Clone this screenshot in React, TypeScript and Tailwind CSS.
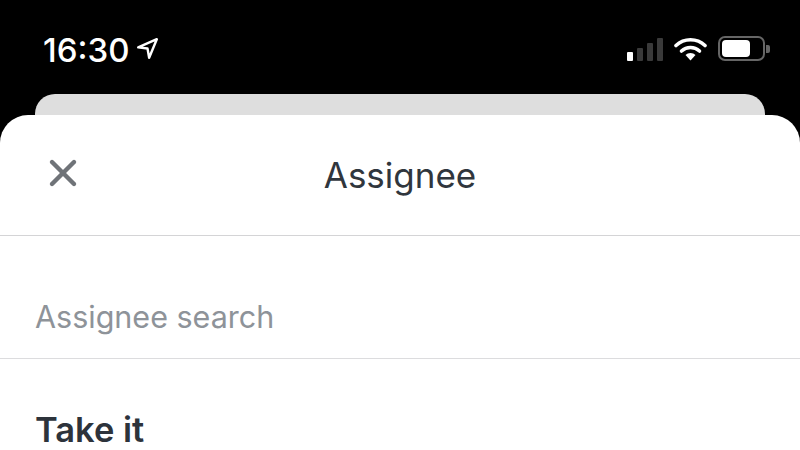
import React from "react";
import { X } from "lucide-react";

function StatusIcons() {
  return (
    <div className="flex items-center">
      {/* signal */}
      <div className="flex items-end gap-[4px] h-[24px]">
        <div className="w-[6px] h-[9px] rounded-[1px] bg-white" />
        <div className="w-[6px] h-[13px] rounded-[1px] bg-[#3a3a3a]" />
        <div className="w-[6px] h-[18px] rounded-[1px] bg-[#3a3a3a]" />
        <div className="w-[6px] h-[23px] rounded-[1px] bg-[#3a3a3a]" />
      </div>
      {/* wifi */}
      <svg className="ml-[11px]" width="33" height="24" viewBox="0 0 33 24">
        <path d="M2 8.5 A21 21 0 0 1 31 8.5" fill="none" stroke="#fff" strokeWidth="3.6" strokeLinecap="round" />
        <path d="M7.5 14 A13.5 13.5 0 0 1 25.5 14" fill="none" stroke="#fff" strokeWidth="3.6" strokeLinecap="round" />
        <path d="M11.5 18 L16.5 23.5 L21.5 18 A7 7 0 0 0 11.5 18 Z" fill="#fff" />
      </svg>
      {/* battery */}
      <div className="ml-[11px] w-[47px] h-[25px] rounded-[7px] border-2 border-[#666] p-[2px] flex">
        <div className="w-[28px] h-full rounded-[4px] bg-white" />
      </div>
      <div className="ml-[1px] w-[4px] h-[8px] rounded-r-[2px] bg-[#666]" />
    </div>
  );
}

export default function App() {
  return (
    <div className="w-[800px] h-[450px] overflow-hidden bg-black flex flex-col font-['Inter',sans-serif]">
      {/* Status bar */}
      <div className="h-[94px] flex justify-between pl-[43px] pr-[30px] pt-[31px] shrink-0">
        <div className="flex items-start">
          <span className="text-[33px] leading-[38px] font-medium text-white">16:30</span>
          <svg className="ml-[7px] mt-[6px]" width="23" height="23" viewBox="0 0 21 21">
            <path d="M2 9.5 L19 2 L12 19 L10.5 10.5 Z" fill="none" stroke="#fff" strokeWidth="2.2" strokeLinejoin="round" />
          </svg>
        </div>
        <div className="pt-[5px] h-fit">
          <StatusIcons />
        </div>
      </div>

      {/* Card behind the sheet */}
      <div className="mx-[35px] h-[21px] shrink-0 rounded-t-[20px] bg-[#dedede]" />

      {/* Sheet */}
      <div className="flex-1 bg-white rounded-t-[28px] flex flex-col">
        <div className="relative h-[121px] shrink-0 border-b border-[#d4d4d6] flex items-center justify-center">
          <X className="absolute left-[41px] top-[36px] text-[#6f7378]" size={44} strokeWidth={2.4} />
          <span className="text-[35px] leading-[40px] text-[#30363d]">Assignee</span>
        </div>
        <div className="h-[123px] shrink-0 border-b border-[#dcdcde] flex items-end pl-[35px] pb-[21px]">
          <span className="text-[30.5px] leading-[40px] text-[#8e9399]">Assignee search</span>
        </div>
        <div className="pl-[35px] pt-[49px]">
          <span className="block text-[34.5px] leading-[44px] font-semibold text-[#2d333b]">Take it</span>
        </div>
      </div>
    </div>
  );
}
